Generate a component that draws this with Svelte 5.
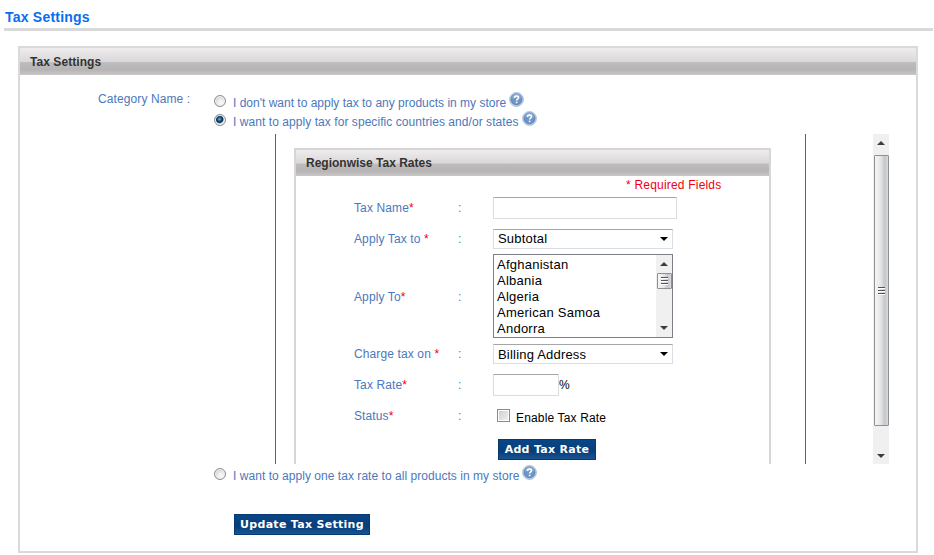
<script>
  const countries = ['Afghanistan', 'Albania', 'Algeria', 'American Samoa', 'Andorra'];
</script>

{#snippet help()}
  <svg class="help" width="15" height="15" viewBox="0 0 15 15" aria-label="Help">
    <defs>
      <linearGradient id="ball" x1="0" y1="0" x2="0" y2="1">
        <stop offset="0" stop-color="#a9c3e0" />
        <stop offset="0.5" stop-color="#6f95c5" />
        <stop offset="1" stop-color="#6a94c6" />
      </linearGradient>
    </defs>
    <circle cx="7.5" cy="7.5" r="6.9" fill="#dfe9f4" stroke="#9db4d0" stroke-width="0.9" />
    <circle cx="7.5" cy="7.4" r="5.6" fill="url(#ball)" stroke="#4f76ad" stroke-width="0.8" />
    <path d="M5.5 5.9C5.5 3.4 9.5 3.4 9.5 5.7C9.5 7.1 7.6 7.1 7.6 8.6" fill="none" stroke="#fff" stroke-width="1.5" />
    <rect x="6.8" y="9.6" width="1.6" height="1.6" fill="#fff" />
  </svg>
{/snippet}

{#snippet up()}
  <svg class="arrow" width="8" height="4" viewBox="0 0 8 4"><path d="M4 0L8 4H0Z" fill="#3c3c3c" /></svg>
{/snippet}

{#snippet down()}
  <svg class="arrow" width="8" height="4" viewBox="0 0 8 4"><path d="M0 0H8L4 4Z" fill="#3c3c3c" /></svg>
{/snippet}

{#snippet caret()}
  <svg width="8" height="4" viewBox="0 0 8 4"><path d="M0 0H8L4 4Z" fill="#000" /></svg>
{/snippet}

{#snippet grip()}
  <svg width="7" height="8" viewBox="0 0 7 8">
    <path d="M0 .5H7M0 3.5H7M0 6.5H7" stroke="#555" />
    <path d="M0 1.5H7M0 4.5H7M0 7.5H7" stroke="#fff" />
  </svg>
{/snippet}

<main>
  <h1><span>Tax Settings</span></h1>
  <section class="panel">
    <h2><span class="t-head">Tax Settings</span></h2>
    <div class="content">
      <div class="category"><span>Category Name :</span></div>
      <div class="options">
        <div class="option"><i class="radio"></i><span class="o1">I don't want to apply tax to any products in my store</span>{@render help()}</div>
        <div class="option"><i class="radio on"></i><span class="o2">I want to apply tax for specific countries and/or states</span>{@render help()}</div>
        <div class="frame">
          <div class="sheet">
            <section class="rates">
              <h2><span class="r-head">Regionwise Tax Rates</span></h2>
              <div class="required">* Required Fields</div>
              <div class="row h30"><span class="label">Tax Name<b>*</b></span><span class="colon">:</span><div class="input wide"></div></div>
              <div class="row h31"><span class="label">Apply Tax to <b>*</b></span><span class="colon">:</span><div class="select"><span>Subtotal</span>{@render caret()}</div></div>
              <div class="row h85"><span class="label">Apply To<b>*</b></span><span class="colon">:</span>
                <div class="list">
                  <div class="items">{#each countries as c}<div>{c}</div>{/each}</div>
                  <div class="bar small">{@render up()}<div class="thumb">{@render grip()}</div><div class="track"></div>{@render down()}</div>
                </div>
              </div>
              <div class="row h30"><span class="label">Charge tax on <b>*</b></span><span class="colon">:</span><div class="select"><span>Billing Address</span>{@render caret()}</div></div>
              <div class="row h31"><span class="label">Tax Rate<b>*</b></span><span class="colon">:</span><div class="input narrow"></div><span class="pct">%</span></div>
              <div class="row h31"><span class="label">Status<b>*</b></span><span class="colon">:</span><i class="check"></i><span class="enable">Enable Tax Rate</span></div>
              <div class="add"><button class="b-add">Add Tax Rate</button></div>
            </section>
          </div>
          <div class="bar big">{@render up()}<div class="thumb">{@render grip()}</div><div class="track"></div>{@render down()}</div>
        </div>
        <div class="option last"><i class="radio"></i><span class="o3">I want to apply one tax rate to all products in my store</span>{@render help()}</div>
        <button class="b-update">Update Tax Setting</button>
      </div>
    </div>
  </section>
</main>

<style>
  :global(body) { background: #fff; overflow: hidden; }
  main {
    box-sizing: border-box;
    width: 934px;
    height: 555px;
    font: 12px/16px "Liberation Sans", Arial, sans-serif;
    color: #4c78bc;
    white-space: nowrap;
  }
  main :global(*) { box-sizing: border-box; }
  svg { display: block; flex: none; }
  h1 {
    margin: 0 1px 0 4px;
    padding: 9px 0 0 1px;
    height: 31px;
    border-bottom: 3px solid #d9d9d9;
    font-size: 14px;
    line-height: 16px;
    letter-spacing: .22px;
    color: #0a6cf0;
  }
  .panel {
    margin: 15px 0 0 18px;
    width: 900px;
    height: 507px;
    border: 2px solid #dadada;
  }
  h2 {
    display: flex;
    align-items: center;
    margin: 0;
    height: 27px;
    padding-left: 10px;
    font-size: 12px;
    line-height: 16px;
    color: #333;
    background: linear-gradient(#eeecec 0, #dad8d8 50%, #bebcbc 54%, #b6b4b4 80%, #c8c6c6 100%);
  }
  .t-head { letter-spacing: .06px; }
  .content { display: flex; padding-top: 16px; }
  .category { width: 194px; padding-left: 78px; letter-spacing: .1px; }
  .option { display: flex; height: 19px; }
  .option span { margin: 4px 3px 0 7px; }
  .o2 { letter-spacing: .06px; }
  .o3 { letter-spacing: .04px; }
  .help { margin-top: 1px; }
  .radio {
    flex: none;
    width: 12px;
    height: 12px;
    margin-top: 4px;
    border: 1px solid #8b8d90;
    border-radius: 50%;
    background: radial-gradient(circle at 60% 65%, #f5f5f5 20%, #c9cccf 80%);
    box-shadow: inset 0 0 0 1px #f4f4f4;
  }
  .radio.on { background: radial-gradient(circle at 45% 42%, #6cc4ee 0, #1b5f91 22%, #0c2b49 40%, #e8ecef 58%, #d5d8da 100%); }
  .frame { display: flex; justify-content: space-between; margin: 5px 0 0 61px; width: 614px; height: 330px; overflow: hidden; }
  .sheet { width: 531px; height: 330px; padding: 14px 0 0 18px; border: solid #5d6070; border-width: 0 1px; overflow: hidden; }
  .rates { width: 477px; height: 340px; border: 2px solid #d6d6d6; }
  .rates h2 { height: 26px; }
  .required { height: 17px; padding: 1px 0 0 330px; color: #f00014; letter-spacing: .2px; }
  .row { display: flex; align-items: center; padding-left: 58px; }
  .h30 { height: 30px; }
  .h31 { height: 31px; }
  .h85 { height: 85px; }
  .label { width: 104px; letter-spacing: .12px; }
  .label b { font-weight: normal; color: #f00014; }
  .colon { width: 35px; }
  .input { height: 22px; border: 1px solid #d9dce1; border-top-color: #a5a6aa; border-radius: 1px; }
  .wide { width: 184px; }
  .narrow { width: 66px; }
  .select {
    display: flex;
    align-items: center;
    justify-content: space-between;
    width: 180px;
    height: 20px;
    padding: 0 4px;
    border: 1px solid #d9dde4;
    border-top-color: #a5a6aa;
    font-size: 13px;
    letter-spacing: .2px;
    color: #000;
  }
  .select span { padding-top: 1px; }
  .list { display: flex; width: 180px; height: 84px; margin-bottom: 1px; border: 1px solid #7d7f86; font-size: 13px; line-height: 16px; color: #000; }
  .items { flex: 1; padding: 2px 3px; letter-spacing: .25px; }
  .bar { display: flex; flex-direction: column; align-items: center; width: 16px; background: #f0f0f0; }
  .small { padding: 7px 0; }
  .big { padding: 7px 0 6px; }
  .thumb {
    display: flex;
    align-items: center;
    justify-content: center;
    width: 15px;
    border: 1px solid #8e9094;
    border-radius: 1px;
    background: linear-gradient(90deg, #f6f6f6 0, #e4e5e6 45%, #c4c6c9 75%, #d8dadd 100%);
  }
  .small .thumb { height: 16px; margin-top: 7px; }
  .big .thumb { height: 271px; margin-top: 10px; }
  .track { flex: 1; }
  .pct { color: #000; }
  .check { width: 13px; height: 13px; margin-left: 4px; border: 1px solid #8a8c8f; background: linear-gradient(135deg, #c7cacd, #f4f4f4); box-shadow: inset 0 0 0 1px #fff; }
  .enable { color: #000; margin: 4px 0 0 6px; letter-spacing: .15px; }
  .add { padding: 8px 0 0 202px; }
  button {
    display: block;
    height: 21px;
    margin: 0;
    padding: 0;
    border: 1px solid #063a70;
    background: linear-gradient(#0a4685 0, #073e79 60%, #185493 100%);
    font: bold 11px/19px "DejaVu Sans", Verdana, sans-serif;
    letter-spacing: .3px;
    color: #fff;
    text-align: center;
    white-space: nowrap;
  }
  .b-add { width: 98px; }
  .b-update { width: 136px; margin: 31px 0 0 20px; }
</style>
